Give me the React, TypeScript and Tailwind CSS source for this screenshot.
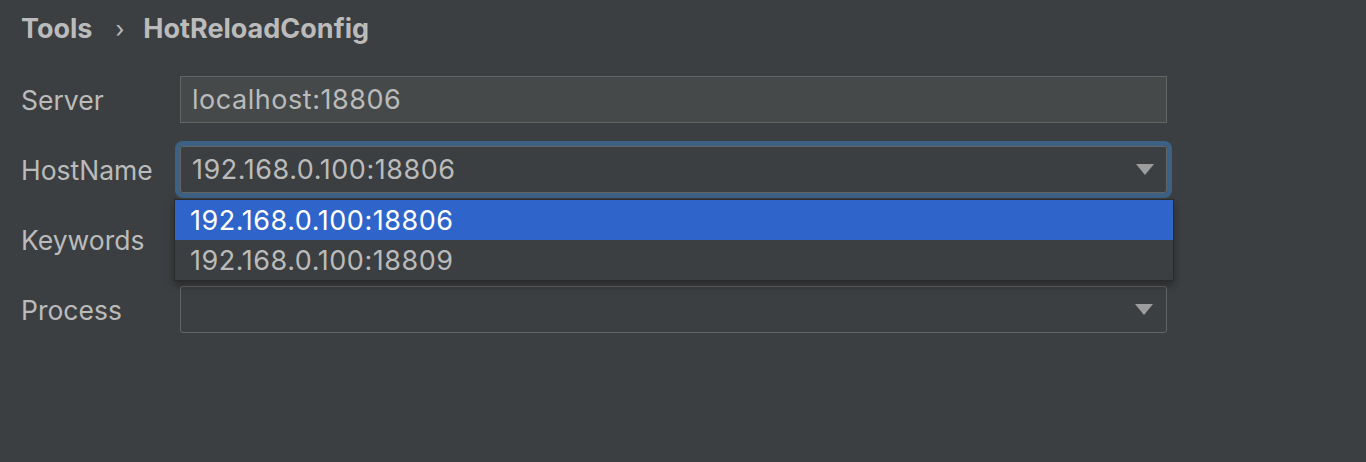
import type { ReactNode } from 'react';

const labelFont = { fontFamily: 'Inter, "Noto Sans", sans-serif' };

function Arrow() {
  return (
    <svg width="18" height="11" viewBox="0 0 18 11" aria-hidden="true">
      <path d="M0 0 H18 L9 11 Z" fill="#9d9d9d" />
    </svg>
  );
}

function Row({ label, children }: { label: string; children: ReactNode }) {
  return (
    <div className="flex h-[47px] items-center">
      <span className="w-[159px] shrink-0 pt-[2px] text-[26.5px] text-[#bbbbbb]">{label}</span>
      <div className="relative w-[987px]">{children}</div>
    </div>
  );
}

export default function App() {
  const hosts = ['192.168.0.100:18806', '192.168.0.100:18809'];

  return (
    <div className="h-[462px] w-[1366px] overflow-hidden bg-[#3c3f41] pl-[21px] pt-[12px]" style={labelFont}>
      <div className="flex h-[34px] items-center text-[27px] font-bold text-[#bbbbbb]">
        <span>Tools</span>
        <span className="ml-[23px] mr-[19px] text-[23px] font-normal">›</span>
        <span>HotReloadConfig</span>
      </div>

      <div className="mt-[30px] flex flex-col gap-[23px]">
        <Row label="Server">
          <div className="flex h-[47px] items-center border-[1.5px] border-[#646464] bg-[#45494a] px-[11px] pt-[2px] text-[27px] tracking-[0.02em] text-[#bbbbbb]">
            localhost:18806
          </div>
        </Row>

        <Row label="HostName">
          <div className="flex h-[47px] items-center rounded-[3px] border border-[#646464] pl-[11px] pr-[12px] text-[27px] tracking-[0.02em] text-[#bbbbbb] shadow-[0_0_0_5px_#3d6185]">
            <span className="flex-1 pt-[2px]">{hosts[0]}</span>
            <Arrow />
          </div>
          <div className="absolute left-[-6px] right-[-7px] top-[53px] z-10 border border-[#2b2b2b] bg-[#3c3f41] shadow-[0_4px_8px_rgba(0,0,0,0.35)]">
            {hosts.map((h, i) => (
              <div
                key={h}
                className={`flex h-[40px] items-center pl-[15px] pt-[2px] text-[27px] tracking-[0.02em] ${
                  i === 0 ? 'bg-[#2f65ca] text-white' : 'text-[#bbbbbb]'
                }`}
              >
                {h}
              </div>
            ))}
          </div>
        </Row>

        <Row label="Keywords">
          <div className="h-[47px] rounded-[3px] border border-[#646464] bg-[#45494a]" />
        </Row>

        <Row label="Process">
          <div className="flex h-[47px] items-center justify-end rounded-[3px] border-[1.5px] border-[#646464] pr-[13px]">
            <Arrow />
          </div>
        </Row>
      </div>
    </div>
  );
}
